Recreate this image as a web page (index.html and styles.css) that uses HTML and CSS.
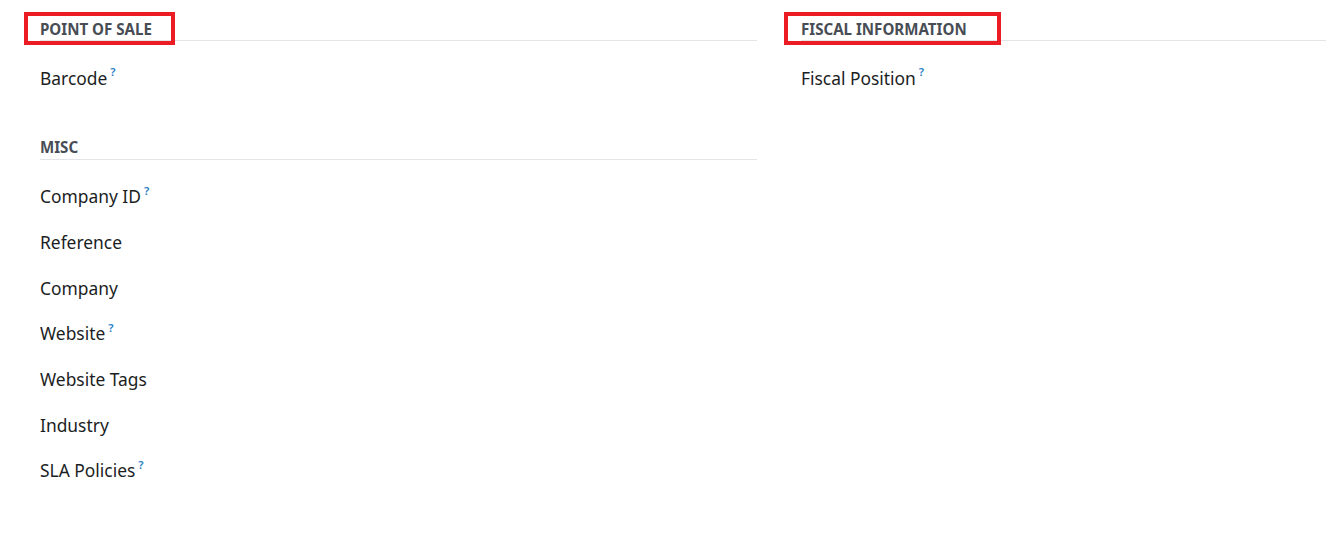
FILE: index.html
```html
<!DOCTYPE html>
<html>
<head>
<meta charset="utf-8">
<link rel="stylesheet" href="styles.css">
</head>
<body>
<div class="sheet">
  <div class="col">
    <section class="group">
      <div class="group-title"><span>POINT OF SALE</span><div class="mark mark-left"></div></div>
      <div class="row"><span class="label">Barcode</span><sup class="help">?</sup></div>
    </section>
    <section class="group group-misc">
      <div class="group-title"><span>MISC</span></div>
      <div class="row"><span class="label">Company ID</span><sup class="help">?</sup></div>
      <div class="row"><span class="label">Reference</span></div>
      <div class="row"><span class="label">Company</span></div>
      <div class="row"><span class="label">Website</span><sup class="help">?</sup></div>
      <div class="row"><span class="label">Website Tags</span></div>
      <div class="row"><span class="label">Industry</span></div>
      <div class="row"><span class="label">SLA Policies</span><sup class="help">?</sup></div>
    </section>
  </div>
  <div class="col">
    <section class="group">
      <div class="group-title"><span>FISCAL INFORMATION</span><div class="mark mark-right"></div></div>
      <div class="row"><span class="label">Fiscal Position</span><sup class="help">?</sup></div>
    </section>
  </div>
</div>
</body>
</html>
```

FILE: styles.css
```css
html, body {
  margin: 0;
  padding: 0;
  background: #ffffff;
  overflow: hidden;
}
body {
  font-family: "Noto Sans", "Open Sans", sans-serif;
  color: #212529;
}
.sheet {
  display: grid;
  grid-template-columns: 717px 1fr;
  column-gap: 44px;
  padding-left: 40px;
  padding-top: 18px;
}
.group-title {
  position: relative;
  height: 22px;
  line-height: 22px;
  font-size: 15.1px;
  font-weight: 700;
  color: #484d55;
  border-bottom: 1px solid #e2e4e8;
  margin-bottom: 14px;
}
.group-misc {
  margin-top: 36px;
}
.group-misc .group-title span {
  position: relative;
  top: -1px;
}
.row {
  display: flex;
  align-items: center;
  height: 45.67px;
  font-size: 17.4px;
}
.label {
  color: #1b1e23;
}
.help {
  align-self: center;
  margin-left: 3px;
  margin-top: -12px;
  font-size: 11.5px;
  color: #2c83c7;
  font-weight: 600;
}
.mark {
  position: absolute;
  top: -6px;
  height: 33px;
  box-sizing: border-box;
  border: 4px solid #ec1c24;
}
.mark-left {
  left: -16px;
  width: 151px;
}
.mark-right {
  left: -17px;
  width: 217px;
}
```
